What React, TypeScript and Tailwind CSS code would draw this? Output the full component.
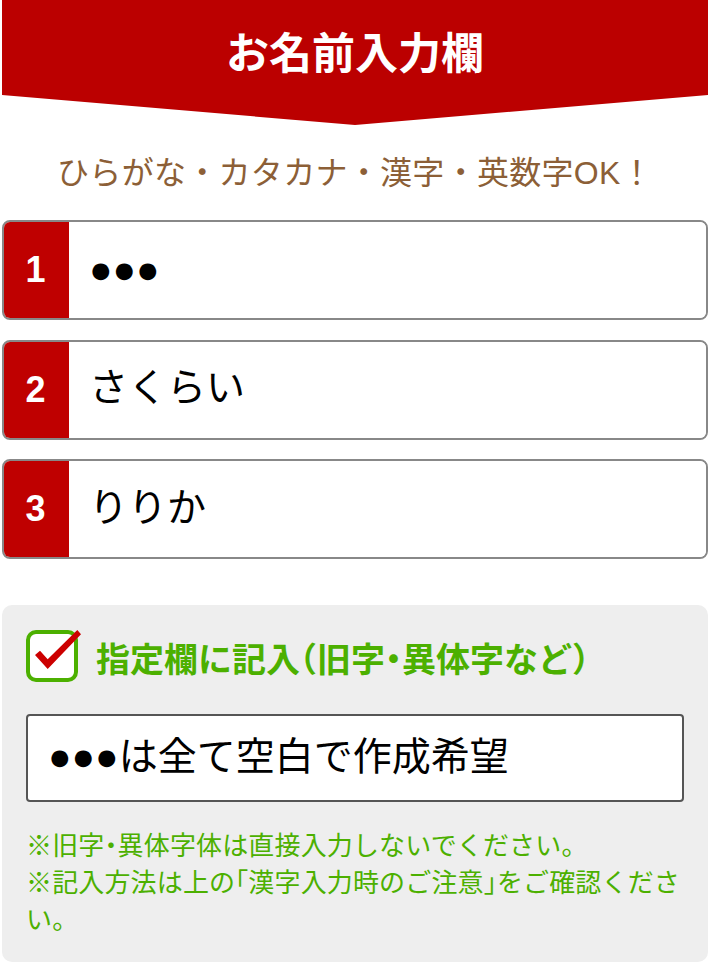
const font = { fontFamily: '"Liberation Sans", "Noto Sans CJK JP", sans-serif' };

const names = [
  { no: 1, value: "●●●", pad: "pb-0" },
  { no: 2, value: "さくらい", pad: "pb-[2px]" },
  { no: 3, value: "りりか", pad: "pb-[2px]" },
];

// half width brackets and dots, the reference sets these narrow
function Half({ children }: { children: string }) {
  return <span className="[font-feature-settings:'halt']">{children}</span>;
}

export default function App() {
  return (
    <div className="w-[710px] h-[965px] overflow-hidden bg-white px-[2px]" style={font}>
      {/* Header */}
      <div className="h-[125px] bg-[#bb0000] pb-[17px] flex items-center justify-center [clip-path:polygon(0_0,100%_0,100%_95px,50%_100%,0_95px)]">
        <h1 className="text-[43px] font-bold leading-none text-white">お名前入力欄</h1>
      </div>
      <p className="mt-[27px] h-[43px] text-center text-[32px] leading-[43px] tracking-[0.3px] text-[#8c5f37] whitespace-nowrap">
        ひらがな・カタカナ・漢字・英数字OK！
      </p>

      {/* Name fields */}
      <div className="mt-[25px] flex flex-col gap-[19.6px]">
        {names.map((n) => (
          <div key={n.no} className="h-[100px] flex overflow-hidden rounded-[8px] border-2 border-[#888888] bg-white">
            <div className="w-[65px] shrink-0 bg-[#bf0000] pr-[2px] flex items-center justify-center text-[36px] font-bold text-white">
              {n.no}
            </div>
            <input
              readOnly
              value={n.value}
              className={`min-w-0 flex-1 bg-white pl-[20px] text-[39px] text-black outline-none ${n.pad}`}
            />
          </div>
        ))}
      </div>

      {/* Kanji note */}
      <div className="mt-[46px] h-[357px] rounded-[10px] bg-[#eeeeee] px-[24px] pt-[24px]">
        <div className="flex items-center gap-[18px] h-[53px]">
          <div className="relative w-[52px] h-[52px] shrink-0 rounded-[10px] border-[4px] border-[#4cb000] bg-white">
            <svg className="absolute left-[-4px] top-[-4px] overflow-visible" width="60" height="60" viewBox="0 0 60 60">
              <polygon points="9,25 14,20.7 21.7,29.3 51.3,0 55,4.3 21.7,39" fill="#cc0000" />
            </svg>
          </div>
          <span className="pt-[8px] text-[34px] font-bold leading-none text-[#4cb000] whitespace-nowrap">
            指定欄に記入<Half>（</Half>旧字<Half>・</Half>異体字など<Half>）</Half>
          </span>
        </div>
        <input
          readOnly
          value="●●●は全て空白で作成希望"
          className="mt-[32px] block h-[88px] w-full rounded-[4px] border-2 border-[#555555] bg-white pl-[20px] pb-[10px] text-[39px] text-black outline-none"
        />
        <div className="mt-[26px] text-[26px] leading-[37px] tracking-[0.15px] text-[#4cb000]">
          <p>※旧字<Half>・</Half>異体字体は直接入力しないでください。</p>
          <p>
            ※記入方法は上の<Half>「</Half>漢字入力時のご注意<Half>」</Half>をご確認くださ
            <br />
            い。
          </p>
        </div>
      </div>
    </div>
  );
}
